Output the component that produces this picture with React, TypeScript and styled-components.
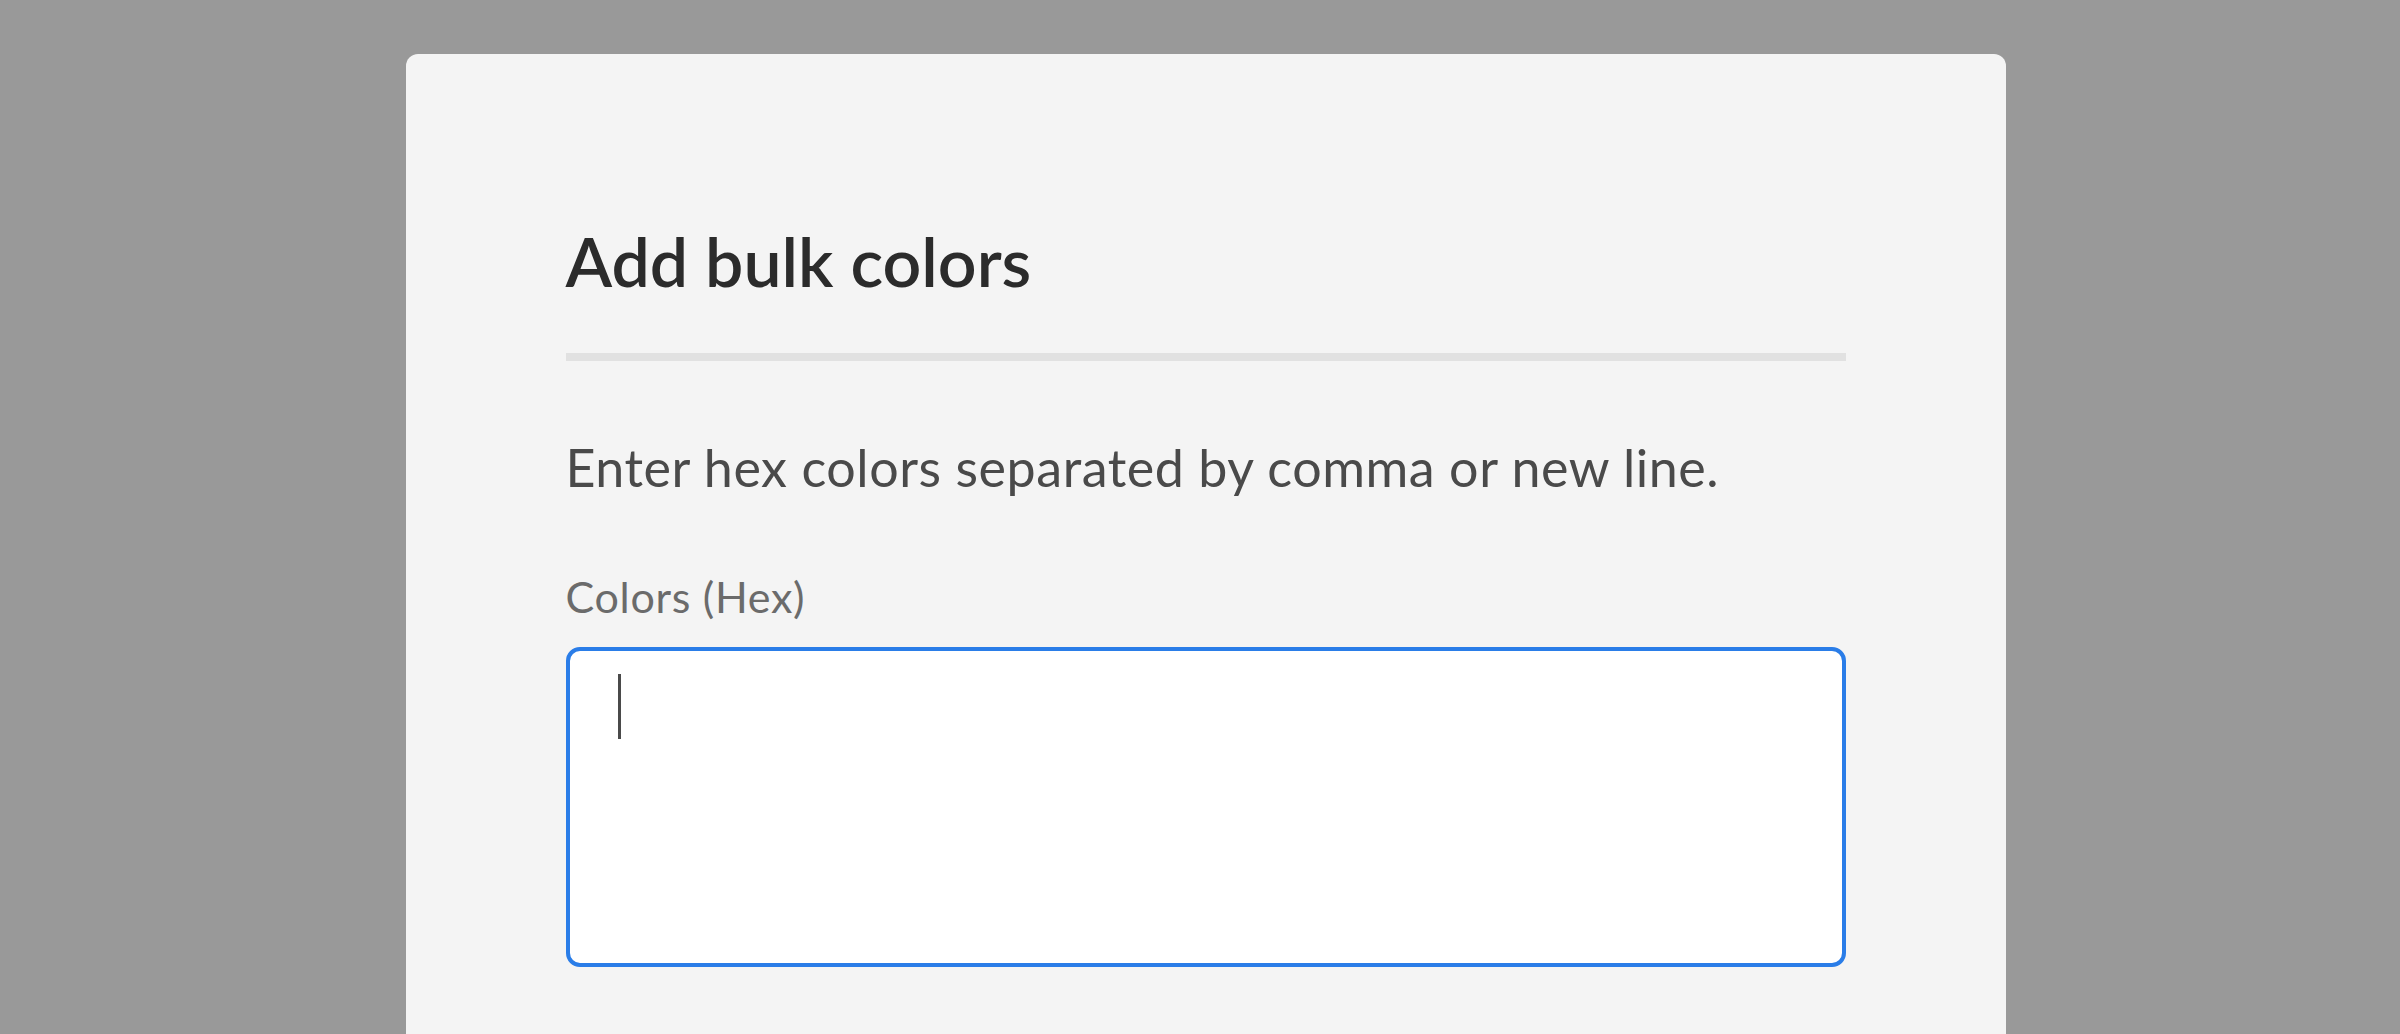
import React from 'react'
import styled, { createGlobalStyle } from 'styled-components'

const GlobalStyle = createGlobalStyle`
  html, body {
    margin: 0;
    padding: 0;
    height: 100%;
    overflow: hidden;
    background: #999999;
  }
  * {
    box-sizing: border-box;
  }
`

const Backdrop = styled.div`
  display: flex;
  justify-content: center;
  height: 100vh;
  padding: 54px 0 0 11px;
  background: #999999;
  font-family: Lato, 'Open Sans', 'Liberation Sans', sans-serif;
`

const Modal = styled.div`
  width: 1600px;
  min-height: 1100px;
  padding: 166px 160px 0;
  background: #f4f4f4;
  border-radius: 12px 12px 0 0;
`

const Title = styled.h2`
  margin: 0;
  font-size: 68px;
  line-height: 1.2;
  font-weight: 600;
  color: #2b2b2b;
`

const Divider = styled.hr`
  margin: 51px 0 0;
  height: 8px;
  border: 0;
  background: #e1e1e1;
`

const Intro = styled.p`
  margin: 75px 0 0;
  font-size: 52px;
  letter-spacing: 0.55px;
  line-height: 1.2;
  color: #4a4a4a;
`

const FieldLabel = styled.label`
  display: block;
  margin-top: 73px;
  font-size: 43px;
  letter-spacing: 0.7px;
  line-height: 1.2;
  color: #6b6b6b;
`

const Field = styled.div`
  margin-top: 24px;
  height: 320px;
  padding: 23px 48px;
  background: #ffffff;
  border: 4px solid #2a7de8;
  border-radius: 14px;
`

const Caret = styled.span`
  display: block;
  width: 3px;
  height: 65px;
  background: #4a4a4a;
`

const App: React.FC = () => {
  return (
    <>
      <GlobalStyle />
      <Backdrop>
        <Modal>
          <Title>Add bulk colors</Title>
          <Divider />
          <Intro>Enter hex colors separated by comma or new line.</Intro>
          <FieldLabel htmlFor="bulk-colors">Colors (Hex)</FieldLabel>
          <Field id="bulk-colors" role="textbox" aria-multiline="true">
            <Caret />
          </Field>
        </Modal>
      </Backdrop>
    </>
  )
}

export default App
